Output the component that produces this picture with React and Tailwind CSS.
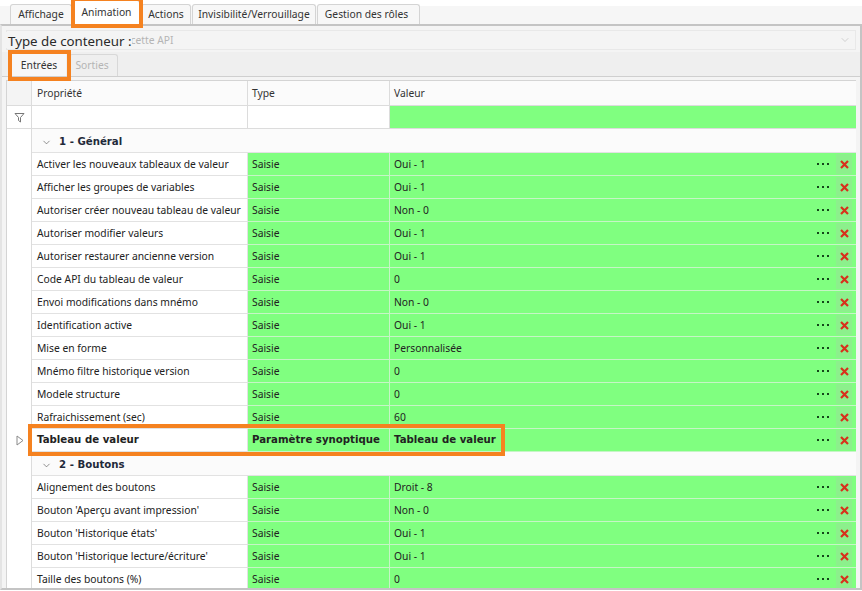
import React from "react";
import { ChevronDown } from "lucide-react";

const font = "font-['Noto_Sans','Open_Sans',sans-serif]";
const boldFont = "font-['DejaVu_Sans',sans-serif] font-bold text-[10.2px]";

const tabs = [
  { label: "Affichage", w: "w-[62px]" },
  { label: "Animation", w: "w-[67px]", active: true },
  { label: "Actions", w: "w-[50px]" },
  { label: "Invisibilité/Verrouillage", w: "w-[124px]" },
  { label: "Gestion des rôles", w: "w-[103px] pr-[4px]" },
];

const general = [
  ["Activer les nouveaux tableaux de valeur", "Oui - 1"],
  ["Afficher les groupes de variables", "Oui - 1"],
  ["Autoriser créer nouveau tableau de valeur", "Non - 0"],
  ["Autoriser modifier valeurs", "Oui - 1"],
  ["Autoriser restaurer ancienne version", "Oui - 1"],
  ["Code API du tableau de valeur", "0"],
  ["Envoi modifications dans mnémo", "Non - 0"],
  ["Identification active", "Oui - 1"],
  ["Mise en forme", "Personnalisée"],
  ["Mnémo filtre historique version", "0"],
  ["Modele structure", "0"],
  ["Rafraichissement (sec)", "60"],
];

const boutons = [
  ["Alignement des boutons", "Droit - 8"],
  ["Bouton 'Aperçu avant impression'", "Non - 0"],
  ["Bouton 'Historique états'", "Oui - 1"],
  ["Bouton 'Historique lecture/écriture'", "Oui - 1"],
  ["Taille des boutons (%)", "0"],
];

const RemoveIcon = () => (
  <span className="flex h-[20px] w-[16px] items-center justify-center bg-[#8cf08c]">
    <svg width="9" height="9" viewBox="0 0 9 9">
      <path d="M1 1 L8 8 M8 1 L1 8" stroke="#d8301c" strokeWidth="2.2" />
    </svg>
  </span>
);

const Row = ({ name, type = "Saisie", value, bold, marker }) => (
  <div className={`flex h-[23px] ${bold ? boldFont : ""}`}>
    <div className="flex w-[25px] shrink-0 items-center justify-center border-r border-[#dcdcdc] bg-white">
      {marker && (
        <svg width="8" height="11" viewBox="0 0 8 11" className="ml-[1px]">
          <path d="M1 1 L7 5.5 L1 10 Z" fill="none" stroke="#8a8a8a" />
        </svg>
      )}
    </div>
    <div className="flex w-[216px] shrink-0 items-center border-r border-b border-[#e2e2e2] bg-white pl-[5px] whitespace-nowrap">
      {name}
    </div>
    <div className="flex w-[142px] shrink-0 items-center border-r border-b border-[#c6f5c6] bg-[#80ff80] pl-[4px] whitespace-nowrap">
      {type}
    </div>
    <div className="flex flex-1 items-center justify-between border-b border-[#c6f5c6] bg-[#80ff80] pl-[4px] pr-[4px] whitespace-nowrap">
      {value}
      <span className="flex items-center gap-[7px]">
        <span className="flex gap-[3px]">
          <i className="h-[2px] w-[2px] bg-[#14461a]" />
          <i className="h-[2px] w-[2px] bg-[#14461a]" />
          <i className="h-[2px] w-[2px] bg-[#14461a]" />
        </span>
        <RemoveIcon />
      </span>
    </div>
  </div>
);

const GroupRow = ({ title }) => (
  <div className="flex h-[24px] bg-white">
    <div className="w-[25px] shrink-0 border-r border-[#dcdcdc]" />
    <div className={`flex flex-1 items-center border-b border-[#e2e2e2] bg-[#fbfbfb] pl-[9px] pt-[3px] text-[#1f2a3a] ${boldFont}`}>
      <ChevronDown size={11} strokeWidth={1.4} className="mr-[7px] text-[#555]" />
      {title}
    </div>
  </div>
);

export default function App() {
  return (
    <div className={`${font} relative h-[591px] w-[862px] overflow-hidden bg-white text-[10.3px] leading-none text-[#222]`}>
      {/* onglets du haut */}
      <div className="flex h-[24px] items-end gap-[1px] border-t-[6px] border-white bg-[#f6f6f6] pl-[10px] text-[#333]">
        {tabs.map((t) => (
          <div
            key={t.label}
            className={`flex items-center justify-center rounded-t-[3px] border border-b-0 border-[#d4d4d4] ${t.w} ${t.active ? "h-[24px] bg-white" : "h-[20px] bg-[#f7f7f7]"}`}
          >
            {t.label}
          </div>
        ))}
      </div>

      <div className="h-[566px] w-[862px] border-2 border-[#c4c4c4] border-l-[#e4e4e4] bg-[#f4f4f4]">
        {/* type de conteneur */}
        <div className="mx-[4px] mt-[4px] flex h-[20px] items-center border border-[#e8e8e8]">
          <span className="relative z-10 -ml-[3px] bg-[#f4f4f4] pl-[4px] pt-[3px] text-[13.3px] text-[#2a2a2a]">Type de conteneur :</span>
          <span className="ml-[-1px] flex-1 text-[#b5b5b5]">cette API</span>
          <ChevronDown size={12} strokeWidth={1} className="mr-[4px] text-[#aaa]" />
        </div>

        {/* sous onglets */}
        <div className="mt-[2px] flex h-[25px] items-end border-b border-[#cfcfcf] bg-[#efefef] pl-[10px]">
          <div className="flex h-[22px] w-[54px] items-center justify-center bg-[#f7f7f7] text-[#333]">Entrées</div>
          <div className="ml-[3px] flex h-[22px] w-[49px] items-center justify-center rounded-t-[3px] border border-b-0 border-[#d8d8d8] pr-[3px] text-[#b5b5b5]">
            Sorties
          </div>
        </div>

        {/* grille */}
        <div className="mt-[3px] ml-[4px] h-[508px] w-[850px] overflow-hidden border-t border-l border-[#d4d4d4] bg-white">
          <div className="flex h-[25px] border-b border-[#dcdcdc] bg-[#fbfbfb] text-[#333]">
            <div className="w-[25px] shrink-0 border-r border-[#dcdcdc] bg-[#f4f4f4]" />
            <div className="flex w-[216px] shrink-0 items-center border-r border-[#dcdcdc] pl-[5px]">Propriété</div>
            <div className="flex w-[142px] shrink-0 items-center border-r border-[#dcdcdc] pl-[4px]">Type</div>
            <div className="flex flex-1 items-center pl-[4px]">Valeur</div>
          </div>
          <div className="flex h-[23px] border-b border-[#dcdcdc]">
            <div className="flex w-[25px] shrink-0 items-center justify-center border-r border-[#dcdcdc]">
              <svg width="11" height="11" viewBox="0 0 11 11">
                <path d="M1 1.5 H10 L6.5 5.5 V10 L4.5 8.5 V5.5 Z" fill="none" stroke="#777" />
              </svg>
            </div>
            <div className="w-[216px] shrink-0 border-r border-[#dcdcdc]" />
            <div className="w-[142px] shrink-0 border-r border-[#dcdcdc]" />
            <div className="flex-1 bg-[#80ff80]" />
          </div>
          <GroupRow title="1 - Général" />
          {general.map(([name, value]) => (
            <Row key={name} name={name} value={value} />
          ))}
          <Row name="Tableau de valeur" type="Paramètre synoptique" value="Tableau de valeur" bold marker />
          <GroupRow title="2 - Boutons" />
          {boutons.map(([name, value]) => (
            <Row key={name} name={name} value={value} />
          ))}
        </div>
      </div>

      {/* encadrés orange */}
      <div className="absolute top-[-3px] left-[71px] h-[31px] w-[72px] border-[4px] border-[#f58220]" />
      <div className="absolute top-[50px] left-[8px] h-[31px] w-[63px] border-[4px] border-[#f58220]" />
      <div className="absolute top-[424px] left-[28px] h-[32px] w-[477px] border-[4px] border-[#f58220]" />
    </div>
  );
}
